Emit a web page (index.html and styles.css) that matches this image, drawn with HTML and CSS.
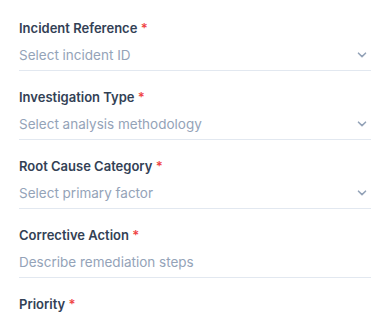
FILE: index.html
```html
<!DOCTYPE html>
<html lang="en">
<head>
<meta charset="utf-8">
<link rel="stylesheet" href="styles.css">
</head>
<body>
<form class="form">
  <div class="field">
    <label class="label">Incident Reference <span class="req">*</span></label>
    <div class="control">
      <span class="placeholder">Select incident ID</span>
      <svg class="chev" width="10" height="6" viewBox="0 0 10 6"><path d="M1.5 1.2 L5 4.6 L8.5 1.2" fill="none" stroke="#94a3b8" stroke-width="1.6" stroke-linecap="round" stroke-linejoin="round"/></svg>
    </div>
  </div>
  <div class="field">
    <label class="label">Investigation Type <span class="req">*</span></label>
    <div class="control">
      <span class="placeholder">Select analysis methodology</span>
      <svg class="chev" width="10" height="6" viewBox="0 0 10 6"><path d="M1.5 1.2 L5 4.6 L8.5 1.2" fill="none" stroke="#94a3b8" stroke-width="1.6" stroke-linecap="round" stroke-linejoin="round"/></svg>
    </div>
  </div>
  <div class="field">
    <label class="label">Root Cause Category <span class="req">*</span></label>
    <div class="control">
      <span class="placeholder">Select primary factor</span>
      <svg class="chev" width="10" height="6" viewBox="0 0 10 6"><path d="M1.5 1.2 L5 4.6 L8.5 1.2" fill="none" stroke="#94a3b8" stroke-width="1.6" stroke-linecap="round" stroke-linejoin="round"/></svg>
    </div>
  </div>
  <div class="field">
    <label class="label">Corrective Action <span class="req">*</span></label>
    <div class="control">
      <span class="placeholder">Describe remediation steps</span>
    </div>
  </div>
  <div class="field">
    <label class="label">Priority <span class="req">*</span></label>
  </div>
</form>
</body>
</html>
```
FILE: styles.css
```css
html, body {
  margin: 0;
  padding: 0;
  background: #ffffff;
}
body {
  font-family: Inter, "Liberation Sans", sans-serif;
}
.form {
  display: flex;
  flex-direction: column;
  gap: 16px;
  padding: 18px 19px 0 19px;
}
.field {
  display: flex;
  flex-direction: column;
}
.label {
  font-size: 13px;
  line-height: 20px;
  font-weight: 600;
  color: #334155;
}
.req {
  color: #ef4444;
}
.control {
  display: flex;
  align-items: center;
  justify-content: space-between;
  height: 32px;
  border-bottom: 1px solid #e2e8f0;
  padding-right: 4px;
}
.placeholder {
  font-size: 13.5px;
  color: #94a3b8;
  padding-top: 1px;
}
.chev {
  display: block;
  margin-top: 1px;
}
```
